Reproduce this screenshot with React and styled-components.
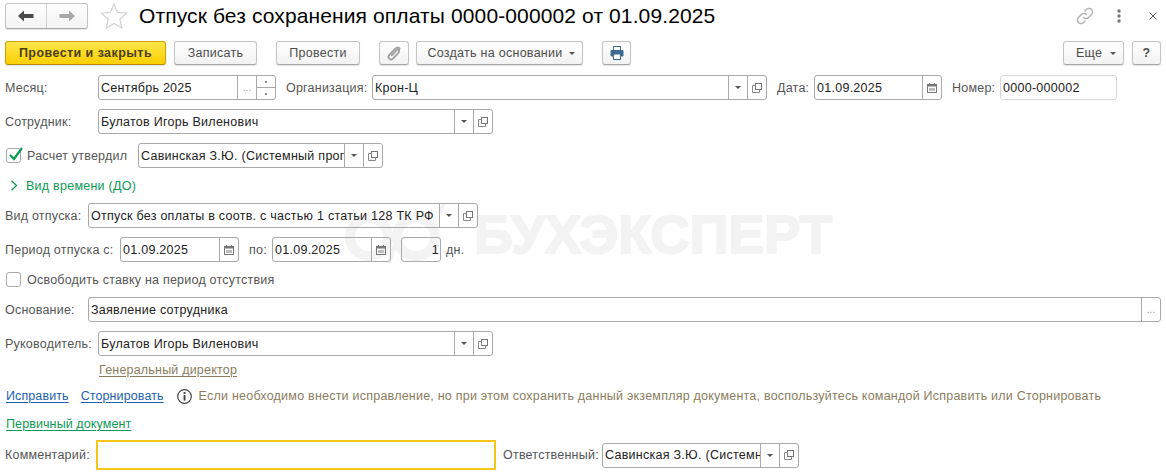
import React from "react";
import styled, { createGlobalStyle } from "styled-components";

const Global = createGlobalStyle`
  html, body { margin: 0; padding: 0; background: #fff; }
  body { font-family: "Liberation Sans", Arial, sans-serif; font-size: 12px; color: #4b4b4b; }
`;

const Page = styled.div`
  position: relative;
  width: 1166px;
  height: 475px;
  overflow: hidden;
  background: #fff;
`;

const Watermark = styled.div`
  position: absolute;
  left: 345px;
  top: 203px;
  display: flex;
  align-items: center;
  gap: 26px;
  color: #f3f3f3;
  font: 700 54px/62px "Liberation Sans", sans-serif;
  letter-spacing: 0;
  -webkit-text-stroke: 2px #f3f3f3;
`;

const Content = styled.div`
  position: relative;
`;

const Header = styled.div`
  display: flex;
  align-items: center;
  height: 31px;
  padding: 0 5px;
  margin-bottom: 10px;
`;

const NavGroup = styled.div`
  display: flex;
  width: 83px;
  height: 26px;
  box-sizing: border-box;
  border: 1px solid #c4c4c4;
  border-bottom-color: #acacac;
  border-radius: 3px;
  background: linear-gradient(#fff, #f3f3f3);
  box-shadow: 0 1px 1px rgba(0,0,0,.12);
`;

const NavBtn = styled.div`
  flex: 1;
  display: flex;
  align-items: center;
  justify-content: center;
  & + & { border-left: 1px solid #d2d2d2; }
`;

const StarBox = styled.div`
  width: 30px;
  height: 30px;
  margin: 0 10px 0 11px;
`;

const Title = styled.div`
  flex: 1;
  font-size: 21px;
  letter-spacing: 0.12px;
  color: #000;
  white-space: nowrap;
`;

const HeaderIcons = styled.div`
  display: flex;
  align-items: center;
  margin-right: 4px;
`;

const KebabIcon = styled.svg`
  margin-left: 22px;
`;

const CloseIcon = styled.svg`
  margin-left: 28px;
`;

const Toolbar = styled.div`
  display: flex;
  align-items: center;
  height: 24px;
  padding: 0 5px;
  margin-bottom: 10px;
`;

const Button = styled.div`
  display: flex;
  align-items: center;
  justify-content: center;
  gap: ${p => p.$gap || 6}px;
  box-sizing: border-box;
  width: ${p => p.$w}px;
  height: 24px;
  margin-left: ${p => p.$ml || 0}px;
  padding-left: ${p => p.$pl || 0}px;
  border: 1px solid ${p => p.$primary ? "#c9a400" : "#c4c4c4"};
  border-bottom-color: ${p => p.$primary ? "#b08e00" : "#a8a8a8"};
  border-radius: 3px;
  background: ${p => p.$primary ? "linear-gradient(#ffe44d, #fbd000)" : "linear-gradient(#fff, #f2f2f2)"};
  box-shadow: 0 1px 1px rgba(0,0,0,.12);
  color: ${p => p.$primary ? "#4a3f10" : "#4d4d4d"};
  font-weight: ${p => p.$bold || p.$primary ? 700 : 400};
  font-size: 12.5px;
  letter-spacing: ${p => p.$primary ? "0.43px" : "0.27px"};
  white-space: nowrap;
`;

const Spacer = styled.div`
  flex: 1;
`;

const Caret = styled.span`
  width: 0;
  height: 0;
  border-left: 3px solid transparent;
  border-right: 3px solid transparent;
  border-top: 3px solid #555;
  flex: none;
`;

const Row = styled.div`
  display: flex;
  align-items: center;
  height: ${p => p.$h || 25}px;
  padding-left: ${p => p.$pl ?? 5}px;
  margin-bottom: ${p => p.$mb ?? 9}px;
`;

const Label = styled.div`
  width: ${p => p.$w ? `${p.$w}px` : "auto"};
  margin-left: ${p => p.$ml || 0}px;
  flex: none;
  color: #555;
  font-size: 12.5px;
  letter-spacing: 0.22px;
  white-space: nowrap;
`;

const Field = styled.div`
  display: flex;
  align-items: stretch;
  box-sizing: border-box;
  width: ${p => p.$w}px;
  height: 25px;
  margin-left: ${p => p.$ml || 0}px;
  flex: none;
  border: 1px solid ${p => p.$light ? "#d9d9d9" : "#a9a9a9"};
  border-radius: 3px;
`;

const Value = styled.div`
  flex: 1;
  min-width: 0;
  display: flex;
  align-items: center;
  justify-content: ${p => p.$right ? "flex-end" : "flex-start"};
  padding: 0 ${p => p.$right ? 1 : 2}px 0 2px;
  overflow: hidden;
  color: #222;
  font-size: 12.5px;
  letter-spacing: 0.27px;
  white-space: nowrap;
`;

const Cell = styled.div`
  width: 18px;
  flex: none;
  display: flex;
  align-items: center;
  justify-content: center;
  border-left: 1px solid #a9a9a9;
  color: #999;
  font-size: 10px;
`;

const Spin = styled.div`
  width: 18px;
  flex: none;
  display: flex;
  flex-direction: column;
  border-left: 1px solid #a9a9a9;
`;

const SpinPart = styled.div`
  flex: 1;
  display: flex;
  align-items: center;
  justify-content: center;
  & + & { border-top: 1px solid #a9a9a9; }
`;

const Dot = styled.span`
  width: 2px;
  height: 2px;
  background: #888;
`;

const Check = styled.div`
  width: 15px;
  height: 15px;
  box-sizing: border-box;
  flex: none;
  margin-left: 1px;
  margin-right: 6px;
  border: 1px solid #a9a9a9;
  border-radius: 3px;
  position: relative;
`;

const CheckMark = styled.svg`
  position: absolute;
  left: 0;
  top: -3px;
`;

const Group = styled.div`
  display: flex;
  align-items: center;
  color: #0a9a55;
  font-size: 12.5px;
  letter-spacing: 0.25px;
  gap: 7px;
`;

const SubLink = styled.div`
  color: #8a7d5e;
  font-size: 12.5px;
  letter-spacing: 0.2px;
  text-decoration: underline;
  text-underline-offset: 2px;
  padding-left: 94px;
`;

const Link = styled.a`
  color: ${p => p.$green ? "#0a9a55" : "#1d5fb0"};
  font-size: 12.5px;
  letter-spacing: 0.1px;
  text-decoration: underline;
  text-underline-offset: 2px;
  margin-right: ${p => p.$mr || 0}px;
  white-space: nowrap;
`;

const Note = styled.div`
  display: flex;
  align-items: center;
  gap: 7px;
  color: #8a7d5e;
  font-size: 12.5px;
  letter-spacing: 0.225px;
  white-space: nowrap;
`;

const CommentBox = styled.div`
  box-sizing: border-box;
  width: 400px;
  height: 30px;
  flex: none;
  margin-left: 6px;
  border: 2px solid #f5c518;
  background: #fff;
`;

const Tri = () => <Caret />;

const OpenIcon = () => (
  <svg width="10" height="10" viewBox="0 0 10 10" fill="none" stroke="#888" strokeWidth="1">
    <rect x="3.5" y="0.5" width="6" height="6" stroke="#777" />
    <path d="M3.5 2.5H0.5V9.5H7.5V6.5" />
  </svg>
);

const CalIcon = () => (
  <svg width="10" height="10" viewBox="0 0 10 10">
    <rect x="0.5" y="1.5" width="9" height="8" fill="none" stroke="#777" />
    <rect x="0.5" y="1" width="9" height="2.5" fill="#777" />
    <rect x="2" y="0" width="1.2" height="2" fill="#777" />
    <rect x="6.8" y="0" width="1.2" height="2" fill="#777" />
    <rect x="2" y="5" width="6" height="3" fill="#bdbdbd" />
  </svg>
);

const Picker = () => (
  <>
    <Cell><Tri /></Cell>
    <Cell><OpenIcon /></Cell>
  </>
);

const DateField = ({ w, ml, value }) => (
  <Field $w={w} $ml={ml}>
    <Value>{value}</Value>
    <Cell><CalIcon /></Cell>
  </Field>
);

export default function App() {
  return (
    <Page>
      <Global />
      <Watermark>
        <svg width="103" height="62" viewBox="0 0 103 62" fill="none" stroke="#f3f3f3" strokeWidth="10">
          <circle cx="24" cy="34" r="19" />
          <circle cx="71" cy="34" r="19" />
          <path d="M44 60L60 10" strokeWidth="4" />
          <path d="M99 0L95 10" strokeWidth="4" />
        </svg>
        <span>БУХЭКСПЕРТ</span>
      </Watermark>
      <Content>
        <Header>
          <NavGroup>
            <NavBtn>
              <svg width="18" height="12" viewBox="0 0 18 12">
                <path d="M7 0.5L1 6L7 11.5V8H16.5V4H7Z" fill="#4a4a4a" />
              </svg>
            </NavBtn>
            <NavBtn>
              <svg width="18" height="12" viewBox="0 0 18 12">
                <path d="M11 0.5L17 6L11 11.5V8H1.5V4H11Z" fill="#a8a8a8" />
              </svg>
            </NavBtn>
          </NavGroup>
          <StarBox>
            <svg width="30" height="30" viewBox="0 0 30 30">
              <path d="M15 3L18.6 11.4L27.6 12.2L20.8 18.2L22.8 27L15 22.4L7.2 27L9.2 18.2L2.4 12.2L11.4 11.4Z" fill="#fff" stroke="#d2d2d2" strokeWidth="1.2" />
            </svg>
          </StarBox>
          <Title>Отпуск без сохранения оплаты 0000-000002 от 01.09.2025</Title>
          <HeaderIcons>
            <svg width="20" height="20" viewBox="0 0 20 20" fill="none" stroke="#b5b5b5" strokeWidth="1.5" strokeLinecap="round">
              <path d="M8.5 11.5a3.5 3.5 0 0 0 5 0l3-3a3.5 3.5 0 0 0-5-5l-1.5 1.5" />
              <path d="M11.5 8.5a3.5 3.5 0 0 0-5 0l-3 3a3.5 3.5 0 0 0 5 5l1.5-1.5" />
            </svg>
            <KebabIcon width="4" height="14" viewBox="0 0 4 14" fill="#777">
              <circle cx="2" cy="2" r="1.7" />
              <circle cx="2" cy="7" r="1.7" />
              <circle cx="2" cy="12" r="1.7" />
            </KebabIcon>
            <CloseIcon width="8" height="8" viewBox="0 0 8 8" stroke="#666" strokeWidth="1">
              <path d="M0.5 0.5L7.5 7.5M7.5 0.5L0.5 7.5" />
            </CloseIcon>
          </HeaderIcons>
        </Header>
        <Toolbar>
          <Button $primary $w={161}>Провести и закрыть</Button>
          <Button $w={83} $ml={8}>Записать</Button>
          <Button $w={84} $ml={19}>Провести</Button>
          <Button $w={30} $ml={19}>
            <svg width="15" height="15" viewBox="0 0 15 15" fill="none" stroke="#a0a0a0" strokeWidth="1.8" strokeLinecap="round" strokeLinejoin="round">
              <path d="M12.5 2.5C11 1 9.5 1.3 8 2.8L2.6 8.6C1 10.4 1.4 12 2.4 12.9C3.6 13.9 5 13.6 6.2 12.4L11.6 6.6C12.5 5.6 12.4 4.6 11.7 4C11 3.4 10.1 3.6 9.2 4.6L4.8 9.4" />
            </svg>
          </Button>
          <Button $w={167} $ml={7} $pl={3}>Создать на основании <Tri /></Button>
          <Button $w={29} $ml={19}>
            <svg width="14" height="14" viewBox="0 0 14 14">
              <rect x="3.5" y="0.5" width="7" height="4" fill="#fff" stroke="#3c6a93" />
              <rect x="0.5" y="4" width="13" height="6.5" rx="1" fill="#3c6a93" />
              <rect x="3.5" y="8" width="7" height="5.5" fill="#fff" stroke="#3c6a93" />
            </svg>
          </Button>
          <Spacer />
          <Button $w={61} $pl={5} $gap={8}>Еще <Tri /></Button>
          <Button $w={29} $ml={8} $bold>?</Button>
        </Toolbar>

        <Row>
          <Label $w={93}>Месяц:</Label>
          <Field $w={178}>
            <Value>Сентябрь 2025</Value>
            <Cell>...</Cell>
            <Spin>
              <SpinPart><Dot /></SpinPart>
              <SpinPart><Dot /></SpinPart>
            </Spin>
          </Field>
          <Label $ml={10} $w={86}>Организация:</Label>
          <Field $w={395}>
            <Value>Крон-Ц</Value>
            <Picker />
          </Field>
          <Label $ml={10} $w={37}>Дата:</Label>
          <DateField w={128} value="01.09.2025" />
          <Label $ml={10} $w={48}>Номер:</Label>
          <Field $w={117} $light>
            <Value>0000-000002</Value>
          </Field>
        </Row>

        <Row>
          <Label $w={93}>Сотрудник:</Label>
          <Field $w={395}>
            <Value>Булатов Игорь Виленович</Value>
            <Picker />
          </Field>
        </Row>

        <Row $mb={5}>
          <Check>
            <CheckMark width="17" height="17" viewBox="0 0 17 17" fill="none" stroke="#0a9a55" strokeWidth="2.2">
              <path d="M3 9L7 13L15 2" />
            </CheckMark>
          </Check>
          <Label $w={111}>Расчет утвердил</Label>
          <Field $w={245}>
            <Value>Савинская З.Ю. (Системный программист)</Value>
            <Picker />
          </Field>
        </Row>

        <Row $h={25} $mb={5} $pl={10}>
          <Group>
            <svg width="9" height="11" viewBox="0 0 9 11" fill="none" stroke="#0a9a55" strokeWidth="1.3">
              <path d="M1.5 0.8L6.5 5.5L1.5 10.2" />
            </svg>
            Вид времени (ДО)
          </Group>
        </Row>

        <Row>
          <Label $w={83}>Вид отпуска:</Label>
          <Field $w={390}>
            <Value>Отпуск без оплаты в соотв. с частью 1 статьи 128 ТК РФ</Value>
            <Picker />
          </Field>
        </Row>

        <Row $mb={5}>
          <Label $w={115}>Период отпуска с:</Label>
          <DateField w={119} value="01.09.2025" />
          <Label $ml={10} $w={23}>по:</Label>
          <DateField w={119} value="01.09.2025" />
          <Field $w={40} $ml={10}>
            <Value $right>1</Value>
          </Field>
          <Label $ml={5}>дн.</Label>
        </Row>

        <Row $h={25} $mb={5}>
          <Check />
          <Label>Освободить ставку на период отсутствия</Label>
        </Row>

        <Row>
          <Label $w={83}>Основание:</Label>
          <Field $w={1073}>
            <Value>Заявление сотрудника</Value>
            <Cell>...</Cell>
          </Field>
        </Row>

        <Row $mb={5}>
          <Label $w={93}>Руководитель:</Label>
          <Field $w={395}>
            <Value>Булатов Игорь Виленович</Value>
            <Picker />
          </Field>
        </Row>

        <Row $h={18} $mb={8} $pl={5}>
          <SubLink>Генеральный директор</SubLink>
        </Row>

        <Row $h={18} $mb={10} $pl={6}>
          <Link href="#" $mr={12}>Исправить</Link>
          <Link href="#" $mr={13}>Сторнировать</Link>
          <Note>
            <svg width="15" height="15" viewBox="0 0 15 15">
              <circle cx="7.5" cy="7.5" r="6.8" fill="none" stroke="#444" strokeWidth="1.2" />
              <rect x="6.6" y="3" width="1.9" height="1.9" fill="#444" />
              <rect x="6.6" y="6" width="1.9" height="5.6" fill="#444" />
            </svg>
            Если необходимо внести исправление, но при этом сохранить данный экземпляр документа, воспользуйтесь командой Исправить или Сторнировать
          </Note>
        </Row>

        <Row $h={18} $mb={7} $pl={6}>
          <Link href="#" $green>Первичный документ</Link>
        </Row>

        <Row $h={30} $mb={0}>
          <Label $w={85}>Комментарий:</Label>
          <CommentBox />
          <Label $ml={7} $w={99}>Ответственный:</Label>
          <Field $w={197}>
            <Value>Савинская З.Ю. (Системный программист)</Value>
            <Picker />
          </Field>
        </Row>
      </Content>
    </Page>
  );
}
